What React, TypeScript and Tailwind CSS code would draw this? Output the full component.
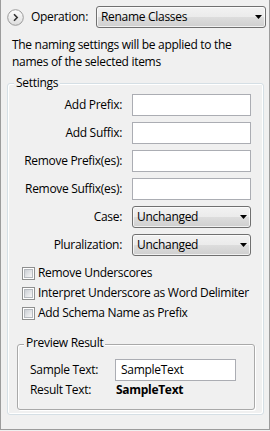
import type { ReactNode } from 'react';

function Expander() {
  return (
    <svg width="17" height="17" viewBox="0 0 17 17" className="shrink-0">
      <defs>
        <linearGradient id="exp" x1="0" y1="0" x2="0" y2="1">
          <stop offset="0" stopColor="#ffffff" />
          <stop offset="1" stopColor="#dcdcdc" />
        </linearGradient>
      </defs>
      <circle cx="8.5" cy="8.5" r="7.8" fill="url(#exp)" stroke="#9a9a9a" />
      <path d="M7 5.2 L10.2 8.5 L7 11.8" fill="none" stroke="#333" strokeWidth="1.6" />
    </svg>
  );
}

function Arrow() {
  return (
    <svg width="7" height="4" viewBox="0 0 7 4" className="shrink-0">
      <path d="M0 0 H7 L3.5 4 Z" fill="#000" />
    </svg>
  );
}

function Combo({ text, className }: { text: string; className: string }) {
  return (
    <div
      className={`flex h-[22px] items-center justify-between rounded-[3px] border border-[#707070] bg-[linear-gradient(#f2f2f2,#ebebeb_50%,#dddddd_50%,#cfcfcf)] pl-[4px] pr-[3px] shadow-[inset_0_0_0_1px_rgba(255,255,255,0.7)] ${className}`}
    >
      <span>{text}</span>
      <Arrow />
    </div>
  );
}

function TextBox({ value = '', className }: { value?: string; className: string }) {
  return (
    <div className={`flex h-[22px] items-center border border-[#abadb3] bg-white pl-[5px] ${className}`}>
      {value}
    </div>
  );
}

function Row({ label, children }: { label: string; children: ReactNode }) {
  return (
    <div className="flex h-[22px] items-center">
      <span className="w-[114px] text-right">{label}</span>
      <div className="ml-[10px]">{children}</div>
    </div>
  );
}

function Check({ label }: { label: string }) {
  return (
    <div className="flex h-[20px] items-center">
      <div className="h-[13px] w-[13px] border border-[#8e8f8f] bg-white p-[1px]">
        <div className="h-full w-full border border-[#b5b9be] bg-linear-to-br from-[#cbcfd5] to-[#f7f7f7]" />
      </div>
      <span className="ml-[3px]">{label}</span>
    </div>
  );
}

export default function App() {
  return (
    <div className="h-[431px] w-[270px] bg-[#f0f0f0] font-['Open_Sans',sans-serif] text-[12px] leading-[16px] tracking-[-0.3px] text-black">
      <div className="h-[430px] border-x border-b border-[#9c9c9c]">
        <div className="flex items-center pr-[3px] pl-[6px] pt-[6px]">
          <Expander />
          <span className="ml-[7px]">Operation:</span>
          <Combo text="Rename Classes" className="ml-auto w-[170px]" />
        </div>

        <p className="mt-[8px] pl-[11px] leading-[17px]">
          The naming settings will be applied to the
          <br />
          names of the selected items
        </p>

        <div className="relative mt-[13px] ml-[6px] w-[257px] rounded-[3px] border border-[#d5dfe5] pt-[10px] pb-[4px] shadow-[inset_1px_1px_0_#ffffff,inset_-1px_-1px_0_#ffffff]">
          <span className="absolute top-[-9px] left-[6px] bg-[#f0f0f0] px-[2px]">Settings</span>

          <div className="flex flex-col gap-[6px]">
            <Row label="Add Prefix:">
              <TextBox className="w-[119px]" />
            </Row>
            <Row label="Add Suffix:">
              <TextBox className="w-[119px]" />
            </Row>
            <Row label="Remove Prefix(es):">
              <TextBox className="w-[119px]" />
            </Row>
            <Row label="Remove Suffix(es):">
              <TextBox className="w-[119px]" />
            </Row>
            <Row label="Case:">
              <Combo text="Unchanged" className="w-[119px]" />
            </Row>
            <Row label="Pluralization:">
              <Combo text="Unchanged" className="w-[119px]" />
            </Row>
          </div>

          <div className="mt-[7px] pl-[14px]">
            <Check label="Remove Underscores" />
            <Check label="Interpret Underscore as Word Delimiter" />
            <Check label="Add Schema Name as Prefix" />
          </div>

          <div className="relative mt-[21px] ml-[9px] w-[238px] rounded-[3px] border border-[#a9a9a9] pt-[14px] pb-[10px] pl-[12px] shadow-[1px_1px_0_#ffffff,inset_1px_1px_0_#ffffff]">
            <span className="absolute top-[-10px] left-[6px] bg-[#f0f0f0] px-[2px]">Preview Result</span>
            <div className="flex h-[22px] items-center">
              <span className="w-[85px]">Sample Text:</span>
              <TextBox value="SampleText" className="w-[121px]" />
            </div>
            <div className="flex h-[18px] items-center">
              <span className="w-[86px]">Result Text:</span>
              <span className="font-bold">SampleText</span>
            </div>
          </div>
        </div>
      </div>
    </div>
  );
}
